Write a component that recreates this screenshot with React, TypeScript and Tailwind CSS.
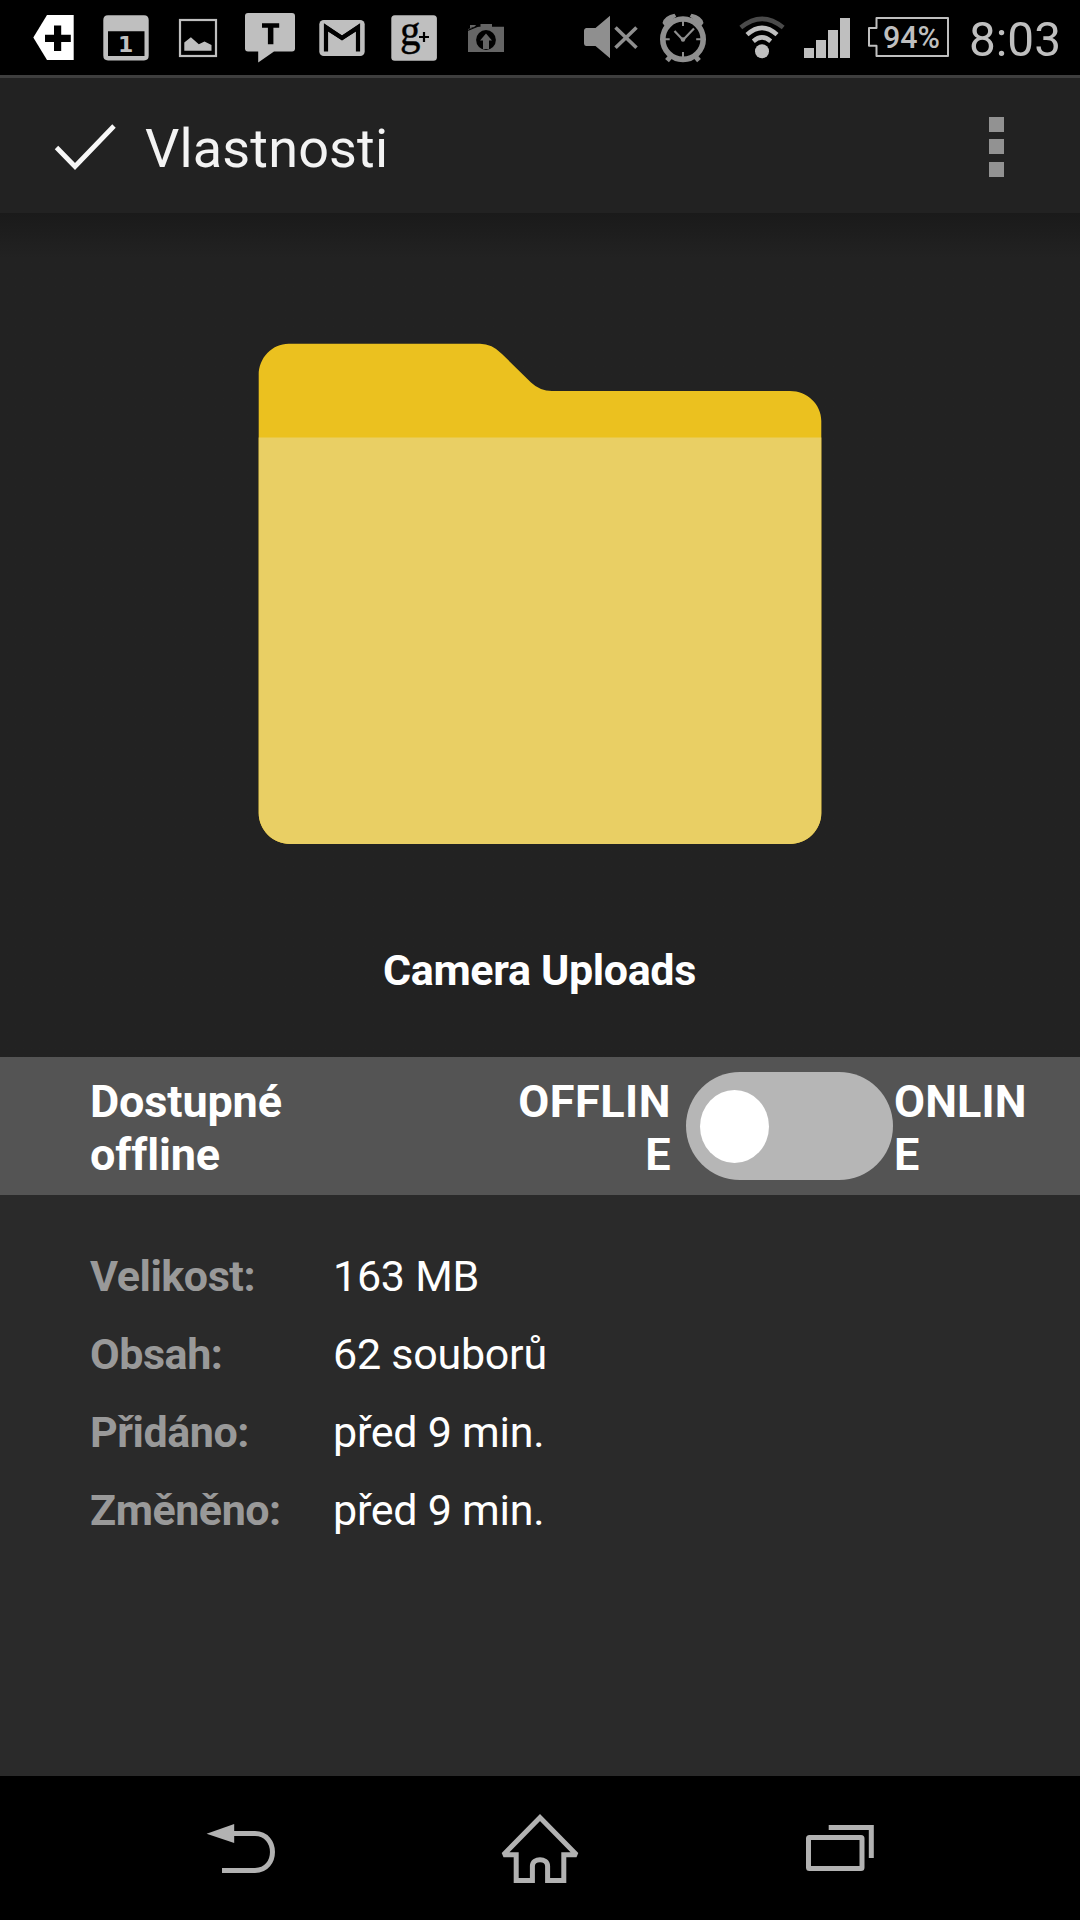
import type { ReactNode } from "react";

type GlyphProps = { x: number; y?: number; w: number; h: number; children: ReactNode };

function Glyph({ x, y = 0, w, h, children }: GlyphProps) {
  return (
    <svg width={w} height={h} viewBox={`${x} ${y} ${w} ${h}`} className="block shrink-0">
      {children}
    </svg>
  );
}

const GREY = "#bfbfbf";

function StatusBar() {
  return (
    <div className="flex h-[75px] bg-black pl-[30px]">
      <Glyph x={30} w={60} h={75}>
        <path d="M33.3 37.5 47 15H73.7V60H47Z" fill="#fff" />
        <path d="M54 25.5h7.2v9.3h9.6v7.2h-9.6v9H54v-9h-9v-7.2h9Z" fill="#000" />
      </Glyph>
      <Glyph x={90} w={75} h={75}>
        <path fillRule="evenodd" fill={GREY} d="M108 15.3h36q4.7 0 4.7 4.7v35.6q0 4.9-4.7 4.9h-36q-4.7 0-4.7-4.9V20q0-4.7 4.7-4.7ZM108 31.3V56h36.5V31.3Z" />
        <text x="125.7" y="52" textAnchor="middle" fill={GREY} className="text-[22px] font-bold" fontFamily="DejaVu Sans">1</text>
      </Glyph>
      <Glyph x={165} w={65} h={75}>
        <rect x="180" y="20" width="36" height="36" fill="none" stroke={GREY} strokeWidth="2.2" />
        <path d="M184.3 50.8v-8.3l6.6-5.3 7.9 7 5.7-2.8 7 3.5v5.9Z" fill={GREY} />
      </Glyph>
      <Glyph x={230} w={76} h={75}>
        <path d="M248 13h44q3 0 3 3v32.5q0 3-3 3h-18L258.2 62.6V51.5H248q-3 0-3-3V16q0-3 3-3Z" fill={GREY} />
        <path d="M262 23.3h17.2v4.5h-5.8v16.4h-5.5V27.8H262Z" fill="#000" />
      </Glyph>
      <Glyph x={306} w={72} h={75}>
        <rect x="319.3" y="20" width="45.4" height="36" rx="4.5" fill={GREY} />
        <path d="M326 51.5V27.2L342 38 358 27.2V51.5" fill="none" stroke="#000" strokeWidth="4.2" />
        <path d="M324 23.8 342 35.5 360 23.8V29L342 40.3 324 29Z" fill="#000" />
      </Glyph>
      <Glyph x={378} w={72} h={75}>
        <rect x="391.3" y="15.2" width="45.6" height="45.6" rx="3.5" fill={GREY} />
        <text x="400" y="44.5" textLength="20.5" lengthAdjust="spacingAndGlyphs" fill="#000" stroke="#000" strokeWidth="0.4" className="text-[44px]" fontFamily="Liberation Serif">g</text>
        <path d="M424 32v10M419 37h10" stroke="#000" strokeWidth="2.2" />
      </Glyph>
      <Glyph x={450} w={130} h={75}>
        <path d="M468 52V29l9-2.3h3.5V24H492v2.7h12V52ZM470 25h6l-1 1.5-5 1.7Z" fill="#656565" />
        <path d="m467.5 30.5 11-4.5" stroke="#000" strokeWidth="1.2" />
        <circle cx="486" cy="40" r="9.9" fill="#000" />
        <path d="m486 33.5 6 7h-3V49h-6v-8.5h-3Z" fill="#656565" />
      </Glyph>
      <Glyph x={580} w={70} h={75}>
        <path d="M586 28h9.5L610 15.8v42.4L595.5 46H586q-2-.5-2-2.5v-13q0-2 2-2.5Z" fill="#8f8f8f" />
        <path d="m615.5 27.5 21 20.2m0-20.2-21 20.2" stroke="#8f8f8f" strokeWidth="3.6" />
      </Glyph>
      <Glyph x={650} w={80} h={75}>
        <g stroke="#8f8f8f" fill="none">
          <circle cx="683" cy="39.2" r="20.2" strokeWidth="5.6" />
          <path d="M683 21v5M683 52v6M664 39.2h5.7M696.2 39.2h5" strokeWidth="2" />
          <path d="m674.5 31 8.5 9 11-11.5" strokeWidth="2.2" />
          <path d="m671 56-4 4.7M695 56l4 4.7" strokeWidth="5" />
        </g>
        <circle cx="683" cy="39.5" r="2.2" fill="#8f8f8f" />
        <path d="M662.5 23q2-7.5 12-9.2l1.7 2.7-11.5 9.5ZM703.5 23q-2-7.5-12-9.2l-1.7 2.7 11.5 9.5Z" fill="#8f8f8f" />
      </Glyph>
      <Glyph x={730} w={65} h={75}>
        <circle cx="762" cy="51.2" r="7" fill={GREY} />
        <path d="M740.8 27.5q21.2-17.4 42.4 0" fill="none" stroke="#4a4a4a" strokeWidth="4.5" />
        <path d="M747 34.7q15-13.6 30 0M753.3 41.2q8.700-7.600 17.400 0" fill="none" stroke={GREY} strokeWidth="4.500" />
      </Glyph>
      <Glyph x={795} w={65} h={75}>
        <path d="M804 48h10v10h-10ZM816 40h10v18h-10ZM828 30h10v28h-10ZM840 18h10v40h-10Z" fill={GREY} />
      </Glyph>
      <Glyph x={860} w={100} h={75}>
        <path d="M876.5 18H948v38H876.5V45.7H869V28h7.5Z" fill="none" stroke={GREY} strokeWidth="2" strokeLinejoin="round" />
        <text x="883" y="48" textLength="57" lengthAdjust="spacingAndGlyphs" fill={GREY} className="text-[31px] font-medium" fontFamily="Roboto">94%</text>
      </Glyph>
      <Glyph x={960} w={120} h={75}>
        <text x="969" y="55.8" textLength="92" lengthAdjust="spacingAndGlyphs" fill={GREY} fontSize="48.5" fontFamily="Roboto">8:03</text>
      </Glyph>
    </div>
  );
}

function ActionBar() {
  return (
    <header className="flex h-[138px] items-start border-t-[3px] border-[#3e3e3e] bg-[#222222]">
      <Glyph x={0} y={78} w={145} h={135}>
        <path d="m56.5 147.5 18.5 19 39-40.5" fill="none" stroke="#f8f8f8" strokeWidth="4.8" />
      </Glyph>
      <h1 className="mt-[39px] text-[54px] leading-[64px] tracking-[0.15px] text-[#f3f3f3]">Vlastnosti</h1>
      <div className="mt-[39px] mr-[76px] ml-auto flex flex-col">
        <span className="size-[15px] bg-[#929292]" />
        <span className="mt-[7px] size-[15px] bg-[#929292]" />
        <span className="mt-2 size-[15px] bg-[#929292]" />
      </div>
    </header>
  );
}

function Preview() {
  return (
    <section className="flex h-[844px] flex-col items-center bg-[#222222] bg-linear-to-b from-[#1a1a1a] to-[#222222] to-[45px] pt-[130px]">
      <Glyph x={258} y={343} w={564} h={502}>
        <path d="M288.7 343.8H480Q492 343.8 502 354L531 382.5Q540 391 552 391H790C807 391 821.3 404 821.3 421V813C821.3 830 807 844 790 844H290C273 844 258.7 830 258.7 813V375C258.7 358 272 343.8 288.7 343.8Z" fill="#ebc11f" />
        <path d="M258.7 437.5H821.3V813C821.3 830 807 844 790 844H290C273 844 258.7 830 258.7 813Z" fill="#e9cf64" />
      </Glyph>
      <h2 className="mt-[100px] pr-px text-[43px] leading-[50px] font-bold tracking-[-0.35px] text-white">Camera Uploads</h2>
    </section>
  );
}

function AvailabilityRow() {
  return (
    <section className="flex h-[138px] items-center bg-[#545454] text-[45px] leading-[53px] font-bold text-white">
      <div className="mt-[3px] ml-[90px] w-[220px] tracking-[-0.15px] [font-variant-ligatures:none]">Dostupné offline</div>
      <div className="mt-[3px] ml-auto w-[170px] text-right tracking-[0.5px]">OFFLIN<br />E</div>
      <div className="ml-[15px] flex h-[108px] w-[207px] items-center rounded-full bg-[#b6b6b6] pl-[13.5px]">
        <span className="h-[73px] w-[69px] rounded-[50%] bg-white" />
      </div>
      <div className="mt-[3px] w-[187px] pl-px tracking-[0.1px]">ONLIN<br />E</div>
    </section>
  );
}

const details = [
  ["Velikost:", "163 MB"],
  ["Obsah:", "62 souborů"],
  ["Přidáno:", "před 9 min."],
  ["Změněno:", "před 9 min."],
];

function Details() {
  return (
    <section className="h-[581px] bg-[#2a2a2a] pt-[42px] pl-[90px]">
      {details.map(([label, value]) => (
        <div key={label} className="flex h-[78px] items-center text-[43px] leading-[50px]">
          <div className="w-[243px] font-bold tracking-[-0.45px] text-[#999999]">{label}</div>
          <div className="tracking-[-0.25px] text-white">{value}</div>
        </div>
      ))}
    </section>
  );
}

function NavigationBar() {
  return (
    <nav className="flex h-36 justify-between bg-black px-[200px]">
      <Glyph x={200} y={1776} w={80} h={144}>
        <path d="M206.6 1833.7 234.2 1824V1843Z" fill="#b2b2b2" />
        <path d="M233 1833.5h22c23.3 0 23.3 37 0 37h-33" fill="none" stroke="#b2b2b2" strokeWidth="5" />
      </Glyph>
      <Glyph x={495} y={1776} w={90} h={144}>
        <path d="M516.2 1854.7H503.500L540 1817.500 576.500 1854.700H563.800V1880.500H547.600V1866C547.600 1857.500 532.400 1857.500 532.400 1866V1880.500H516.200Z" fill="none" stroke="#b2b2b2" strokeWidth="5" strokeMiterlimit="2" />
      </Glyph>
      <Glyph x={800} y={1776} w={80} h={144}>
        <rect x="808.5" y="1837.5" width="53.5" height="31" rx="1" fill="none" stroke="#b2b2b2" strokeWidth="5" />
        <path d="M828.7 1827.5H871.3V1858" fill="none" stroke="#b2b2b2" strokeWidth="5" />
      </Glyph>
    </nav>
  );
}

export default function App() {
  return (
    <main className="flex h-[1920px] w-[1080px] flex-col overflow-hidden bg-[#2a2a2a] font-[Roboto,sans-serif]">
      <StatusBar />
      <ActionBar />
      <Preview />
      <AvailabilityRow />
      <Details />
      <NavigationBar />
    </main>
  );
}
